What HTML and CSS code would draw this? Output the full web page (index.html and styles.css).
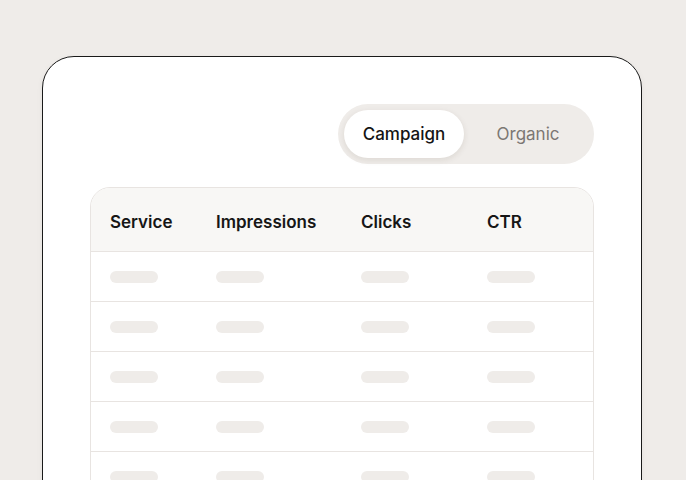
FILE: index.html
```html
<!DOCTYPE html>
<html>
<head>
<meta charset="utf-8">
<link rel="stylesheet" href="styles.css">
</head>
<body>
<div class="card">
  <div class="toolbar">
    <div class="toggle">
      <div class="seg seg-active">Campaign</div>
      <div class="seg seg-alt">Organic</div>
    </div>
  </div>
  <div class="table">
    <div class="row head">
      <div class="cell">Service</div>
      <div class="cell">Impressions</div>
      <div class="cell">Clicks</div>
      <div class="cell">CTR</div>
    </div>
    <div class="row"><div class="cell"><span class="sk"></span></div><div class="cell"><span class="sk"></span></div><div class="cell"><span class="sk"></span></div><div class="cell"><span class="sk"></span></div></div>
    <div class="row"><div class="cell"><span class="sk"></span></div><div class="cell"><span class="sk"></span></div><div class="cell"><span class="sk"></span></div><div class="cell"><span class="sk"></span></div></div>
    <div class="row"><div class="cell"><span class="sk"></span></div><div class="cell"><span class="sk"></span></div><div class="cell"><span class="sk"></span></div><div class="cell"><span class="sk"></span></div></div>
    <div class="row"><div class="cell"><span class="sk"></span></div><div class="cell"><span class="sk"></span></div><div class="cell"><span class="sk"></span></div><div class="cell"><span class="sk"></span></div></div>
    <div class="row"><div class="cell"><span class="sk"></span></div><div class="cell"><span class="sk"></span></div><div class="cell"><span class="sk"></span></div><div class="cell"><span class="sk"></span></div></div>
  </div>
</div>
</body>
</html>
```
FILE: styles.css
```css
html, body {
  margin: 0;
  padding: 0;
  background: #efece9;
  font-family: Inter, "Liberation Sans", sans-serif;
  overflow: hidden;
}
body {
  padding: 56px 0 0 42px;
}
.card {
  width: 600px;
  height: 520px;
  box-sizing: border-box;
  background: #fff;
  border: 1px solid #1a1a1a;
  border-radius: 32px;
  padding: 47px 47px 0 47px;
  box-shadow: 0 2px 6px rgba(0,0,0,0.05);
}
.toolbar {
  display: flex;
  justify-content: flex-end;
}
.toggle {
  display: flex;
  background: #efece9;
  border-radius: 30px;
  padding: 6px;
  height: 60px;
  box-sizing: border-box;
}
.seg {
  width: 120px;
  height: 48px;
  display: flex;
  align-items: center;
  justify-content: center;
  font-size: 17px;
  color: #7c7773;
  border-radius: 24px;
}
.seg-alt {
  width: 124px;
  box-sizing: border-box;
  padding-left: 4px;
}
.seg-active {
  background: #fff;
  color: #141414;
  font-weight: 500;
  box-shadow: 0 2px 6px rgba(60,40,20,0.10);
}
.table {
  margin-top: 23px;
  border: 1px solid #e8e4e1;
  border-radius: 20px;
  overflow: hidden;
}
.row {
  display: grid;
  grid-template-columns: 106px 145px 126px 1fr;
  padding-left: 19px;
  height: 49px;
  align-items: center;
  border-top: 1px solid #e8e4e1;
}
.row.head {
  border-top: none;
  height: 63px;
  background: #f8f7f5;
}
.head .cell {
  font-size: 17px;
  font-weight: 600;
  color: #161616;
  padding-top: 4px;
}
.sk {
  display: block;
  width: 48px;
  height: 12px;
  border-radius: 6px;
  background: #efece9;
}
```
